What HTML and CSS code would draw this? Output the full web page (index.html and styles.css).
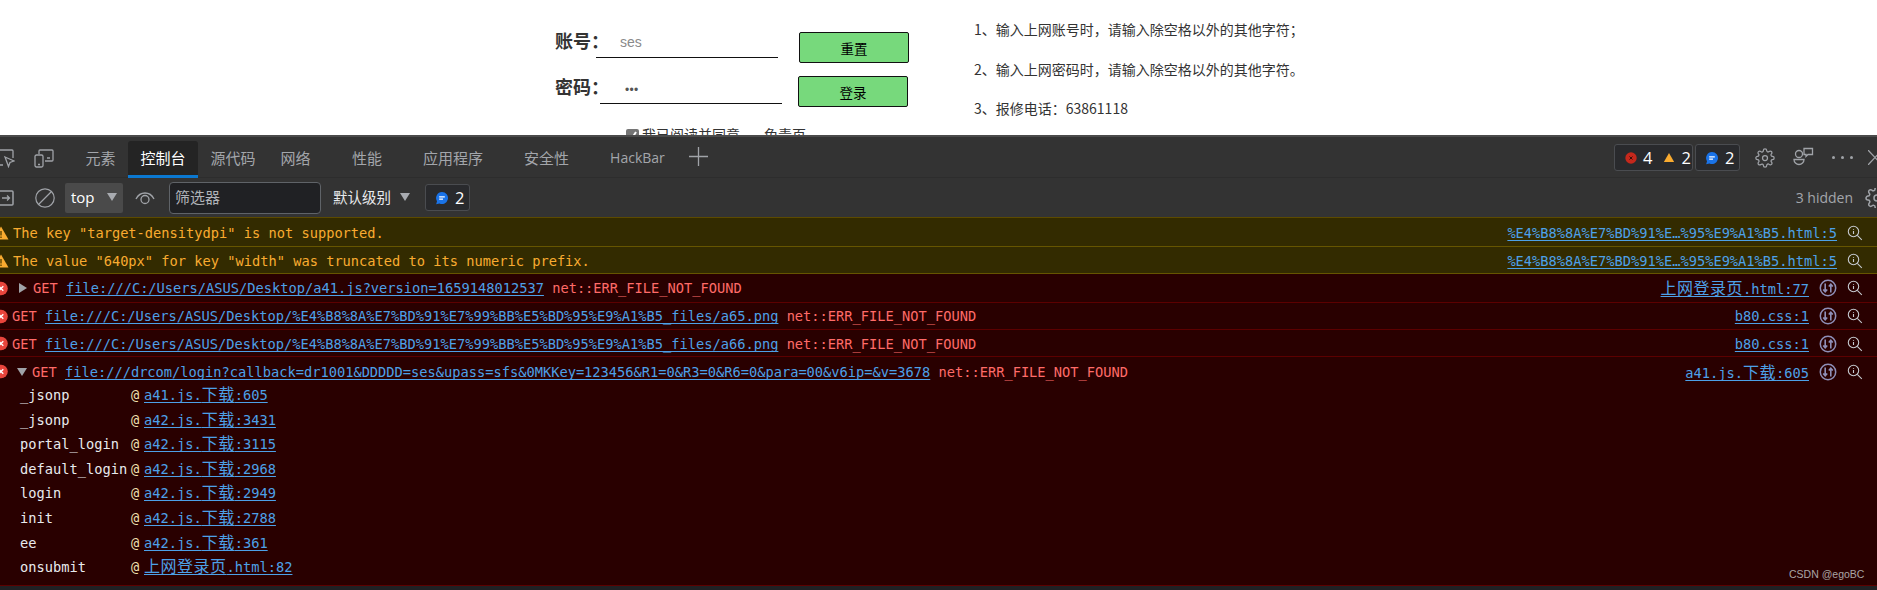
FILE: index.html
```html
<!DOCTYPE html>
<html lang="zh-CN">
<head>
<meta charset="utf-8">
<title>上网登录页</title>
<link rel="stylesheet" href="styles.css">
</head>
<body>
<svg class="defs" width="0" height="0" aria-hidden="true">
  <symbol id="gear" viewBox="0 0 24 24"><g fill="none" stroke="currentColor" stroke-width="1.5"><circle cx="12" cy="12" r="3"/><path d="M19.4 15a1.65 1.65 0 0 0 .33 1.82l.06.06a2 2 0 0 1 0 2.83 2 2 0 0 1-2.83 0l-.06-.06a1.65 1.65 0 0 0-1.82-.33 1.65 1.65 0 0 0-1 1.51V21a2 2 0 0 1-2 2 2 2 0 0 1-2-2v-.09A1.65 1.65 0 0 0 9 19.4a1.65 1.65 0 0 0-1.82.33l-.06.06a2 2 0 0 1-2.83 0 2 2 0 0 1 0-2.83l.06-.06a1.65 1.65 0 0 0 .33-1.82 1.65 1.65 0 0 0-1.51-1H3a2 2 0 0 1-2-2 2 2 0 0 1 2-2h.09A1.65 1.65 0 0 0 4.6 9a1.65 1.65 0 0 0-.33-1.82l-.06-.06a2 2 0 0 1 0-2.83 2 2 0 0 1 2.83 0l.06.06a1.65 1.65 0 0 0 1.82.33H9a1.65 1.65 0 0 0 1-1.51V3a2 2 0 0 1 2-2 2 2 0 0 1 2 2v.09a1.65 1.65 0 0 0 1 1.51 1.65 1.65 0 0 0 1.82-.33l.06-.06a2 2 0 0 1 2.83 0 2 2 0 0 1 0 2.83l-.06.06a1.65 1.65 0 0 0-.33 1.82V9a1.65 1.65 0 0 0 1.51 1H21a2 2 0 0 1 2 2 2 2 0 0 1-2 2h-.09a1.65 1.65 0 0 0-1.51 1z"/></g></symbol>
  <symbol id="chat" viewBox="0 0 14 14"><path fill="#1a73e8" d="M7 1a6 6 0 1 1-2.6 11.4L1.2 13.2l.8-3A6 6 0 0 1 7 1z"/><path stroke="#fff" stroke-width="1.2" d="M4.2 5.8h5.6M4.2 8.2h3.8"/></symbol>
  <symbol id="warn" viewBox="0 0 16 16"><path fill="#f9ab30" d="M8 1.5 15.5 14.5H.5z"/></symbol>
  <symbol id="warn-clip" viewBox="7 0 9 16"><path fill="#f9ab30" d="M8 1.5 15.5 14.5H.5z"/><path stroke="#5b4300" stroke-width="1.4" d="M8 6v4.5M8 11.5v1.4"/></symbol>
  <symbol id="err-clip" viewBox="6.5 0 8 15"><circle cx="7.5" cy="7.5" r="6.8" fill="#e8453c"/><path stroke="#fff" stroke-width="1.4" d="m5.2 5.2 4.6 4.6m0-4.6-4.6 4.6"/></symbol>
  <symbol id="search" viewBox="0 0 16 16"><g fill="none" stroke="#c5c9cf" stroke-width="1.1"><circle cx="6.5" cy="6.5" r="5.2"/><path d="m10.3 10.3 4.5 4.5M6.5 4.2v.9M6.5 6v3"/></g></symbol>
  <symbol id="net" viewBox="0 0 18 18"><circle cx="9" cy="9" r="7.7" fill="none" stroke="#8f8fb8" stroke-width="1.5"/><path fill="none" stroke="#8f8fb8" stroke-width="1.6" d="M6.2 4.5v8m-2-2 2 2.2 2-2.2M11.8 13.500v-8m-2 2 2-2.200 2 2.200"/></symbol>
</svg>

<section class="page">
  <form class="login">
    <div class="row-login">
      <label class="lbl">账号：</label>
      <span class="field">ses</span>
      <button class="btn" type="button">重置</button>
    </div>
    <div class="row-login second">
      <label class="lbl">密码：</label>
      <span class="field pass">•••</span>
      <button class="btn" type="button">登录</button>
    </div>
    <div class="agree">
      <span class="check"><svg viewBox="0 0 13 13" width="13" height="13"><path fill="none" stroke="#fff" stroke-width="2" d="m3 7 2.500 3L10 3"/></svg></span>
      <span>我已阅读并同意</span><span class="disclaimer">免责页</span>
    </div>
  </form>
  <div class="tips">
    <p>1、输入上网账号时，请输入除空格以外的其他字符；</p>
    <p>2、输入上网密码时，请输入除空格以外的其他字符。</p>
    <p>3、报修电话：63861118</p>
  </div>
</section>

<section class="devtools">
  <header class="tabbar">
    <svg class="ic-inspect" width="15" height="20" viewBox="6 0 15 20"><g fill="none" stroke="#a0a3a8" stroke-width="1.300"><path d="M9 17H2a1 1 0 0 1-1-1V3a1 1 0 0 1 1-1h16a1 1 0 0 1 1 1v7"/><path d="m11 9 9 4-4 1.500-1.500 4z"/></g></svg>
    <svg class="ic-device" width="20" height="19" viewBox="0 0 20 19"><g fill="none" stroke="#a0a3a8" stroke-width="1.300"><path d="M5 5V2a1 1 0 0 1 1-1h12a1 1 0 0 1 1 1v9a1 1 0 0 1-1 1h-7"/><rect x="1" y="6" width="8" height="12" rx="1.500"/><path d="M13 9h3M4 15.500h2"/></g></svg>
    <nav class="tabs">
      <span class="tab">元素</span>
      <span class="tab active">控制台</span>
      <span class="tab">源代码</span>
      <span class="tab net-tab">网络</span>
      <span class="tab wide">性能</span>
      <span class="tab wide">应用程序</span>
      <span class="tab wide">安全性</span>
      <span class="tab wide hack">HackBar</span>
      <svg class="plus" width="19" height="19" viewBox="0 0 19 19"><path stroke="#a0a3a8" stroke-width="1.300" d="M9.500 0v19M0 9.500h19"/></svg>
    </nav>
    <div class="tab-right">
      <span class="badge big">
        <svg width="12" height="12" viewBox="0 0 12 12"><circle cx="6" cy="6" r="5.700" fill="#c5281c"/><path stroke="#3a0d08" stroke-width="1" d="m4.500 4.500 3 3m0-3-3 3"/></svg>
        <b>4</b>
        <svg class="warn-s" width="12" height="11"><use href="#warn"/></svg>
        <b>2</b>
      </span>
      <span class="badge small">
        <svg width="13" height="13"><use href="#chat"/></svg>
        <b>2</b>
      </span>
      <svg class="gear" width="20" height="20"><use href="#gear"/></svg>
      <svg class="people" width="21" height="21" viewBox="0 0 21 21"><g fill="none" stroke="#a0a3a8" stroke-width="1.300"><circle cx="6" cy="7" r="3.500"/><path d="M1 12.500h10a5 5 0 0 1-10 0zM11 1.500h8.500v6H15l-2 2v-2h-2z"/></g></svg>
      <span class="dots"><i></i><i></i><i></i></span>
      <svg class="close" width="9" height="15" viewBox="0 0 9 15"><path fill="none" stroke="#a0a3a8" stroke-width="1.300" d="m0 0 14 15M14 0 0 15"/></svg>
    </div>
  </header>

  <div class="toolbar">
    <svg class="ic-panel" width="14" height="16" viewBox="0 0 14 16"><path fill="none" stroke="#a0a3a8" stroke-width="1.500" d="M0 1h12a1 1 0 0 1 1 1v12a1 1 0 0 1-1 1H0"/><path fill="none" stroke="#a0a3a8" stroke-width="1.300" d="M2 8h7M7 5.500 9.500 8 7 10.500"/></svg>
    <svg class="ic-clear" width="20" height="20" viewBox="0 0 20 20"><g fill="none" stroke="#a0a3a8" stroke-width="1.200"><circle cx="10" cy="10" r="9.200"/><path d="M3.500 16.500 16.500 3.500"/></g></svg>
    <span class="select">top<i class="tri"></i></span>
    <svg class="ic-eye" width="20" height="14" viewBox="0 0 20 14"><g fill="none" stroke="#a0a3a8" stroke-width="1.300"><path d="M1 8c4-8 14-8 18 0"/><circle cx="10" cy="8.500" r="4"/></g></svg>
    <span class="filter">筛选器</span>
    <span class="level">默认级别<i class="tri"></i></span>
    <span class="badge msg">
      <svg width="13" height="14"><use href="#chat"/></svg>
      <b>2</b>
    </span>
    <span class="hidden-count">3 hidden</span>
    <svg class="gear clipped" width="12" height="20" viewBox="0 0 12 24" preserveAspectRatio="xMinYMid slice"><use href="#gear" width="24" height="24"/></svg>
  </div>

  <div class="console">
    <div class="msg-row warning first">
      <svg class="lead" width="9" height="16"><use href="#warn-clip"/></svg>
      <span class="text">The key "target-densitydpi" is not supported.</span>
      <a class="src">%E4%B8%8A%E7%BD%91%E…%95%E9%A1%B5.html:5</a>
      <svg class="find"><use href="#search"/></svg>
    </div>
    <div class="msg-row warning">
      <svg class="lead" width="9" height="16"><use href="#warn-clip"/></svg>
      <span class="text">The value "640px" for key "width" was truncated to its numeric prefix.</span>
      <a class="src">%E4%B8%8A%E7%BD%91%E…%95%E9%A1%B5.html:5</a>
      <svg class="find"><use href="#search"/></svg>
    </div>
    <div class="msg-row error tall">
      <svg class="lead" width="8" height="15"><use href="#err-clip"/></svg>
      <i class="arrow right"></i>
      <span class="text">GET <a>file:///C:/Users/ASUS/Desktop/a41.js?version=1659148012537</a> net::ERR_FILE_NOT_FOUND</span>
      <a class="src"><span class="cjk">上网登录页</span>.html:77</a>
      <svg class="netic"><use href="#net"/></svg>
      <svg class="find"><use href="#search"/></svg>
    </div>
    <div class="msg-row error">
      <svg class="lead" width="8" height="15"><use href="#err-clip"/></svg>
      <span class="text close-lead">GET <a>file:///C:/Users/ASUS/Desktop/%E4%B8%8A%E7%BD%91%E7%99%BB%E5%BD%95%E9%A1%B5_files/a65.png</a> net::ERR_FILE_NOT_FOUND</span>
      <a class="src">b80.css:1</a>
      <svg class="netic"><use href="#net"/></svg>
      <svg class="find"><use href="#search"/></svg>
    </div>
    <div class="msg-row error lower">
      <svg class="lead" width="8" height="15"><use href="#err-clip"/></svg>
      <span class="text close-lead">GET <a>file:///C:/Users/ASUS/Desktop/%E4%B8%8A%E7%BD%91%E7%99%BB%E5%BD%95%E9%A1%B5_files/a66.png</a> net::ERR_FILE_NOT_FOUND</span>
      <a class="src">b80.css:1</a>
      <svg class="netic"><use href="#net"/></svg>
      <svg class="find"><use href="#search"/></svg>
    </div>
    <div class="msg-row error last">
      <svg class="lead" width="8" height="15"><use href="#err-clip"/></svg>
      <i class="arrow down"></i>
      <span class="text">GET <a>file:///drcom/login?callback=dr1001&amp;DDDDD=ses&amp;upass=sfs&amp;0MKKey=123456&amp;R1=0&amp;R3=0&amp;R6=0&amp;para=00&amp;v6ip=&amp;v=3678</a> net::ERR_FILE_NOT_FOUND</span>
      <a class="src">a41.js.<span class="cjk">下载</span>:605</a>
      <svg class="netic"><use href="#net"/></svg>
      <svg class="find"><use href="#search"/></svg>
    </div>
    <div class="stack">
      <span>_jsonp</span><span>@</span><a>a41.js.<span class="cjk">下载</span>:605</a>
      <span>_jsonp</span><span>@</span><a>a42.js.<span class="cjk">下载</span>:3431</a>
      <span>portal_login</span><span>@</span><a>a42.js.<span class="cjk">下载</span>:3115</a>
      <span>default_login</span><span>@</span><a>a42.js.<span class="cjk">下载</span>:2968</a>
      <span>login</span><span>@</span><a>a42.js.<span class="cjk">下载</span>:2949</a>
      <span>init</span><span>@</span><a>a42.js.<span class="cjk">下载</span>:2788</a>
      <span>ee</span><span>@</span><a>a42.js.<span class="cjk">下载</span>:361</a>
      <span>onsubmit</span><span>@</span><a><span class="cjk">上网登录页</span>.html:82</a>
    </div>
  </div>
  <span class="watermark">CSDN @egoBC</span>
</section>
</body>
</html>
```

FILE: styles.css
```css
* { box-sizing: border-box; }
html, body { margin: 0; padding: 0; }
body {
  width: 1877px;
  height: 590px;
  overflow: hidden;
  background: #fff;
  font-family: "Liberation Sans", "Noto Sans CJK SC", sans-serif;
}
.defs { position: absolute; }

/* login page */
.page {
  height: 135px;
  overflow: hidden;
  display: flex;
  padding-left: 555px;
}
.login { width: 419px; padding-top: 32px; }
.row-login { display: flex; align-items: flex-start; height: 31px; }
.row-login.second { margin-top: 13px; }
.lbl {
  width: 41px;
  white-space: nowrap;
  font-size: 18px;
  font-weight: 700;
  line-height: 22px;
  margin-top: -1px;
  color: #333;
}
.field {
  width: 182px;
  height: 26px;
  border-bottom: 1px solid #111;
  padding-left: 24px;
  font-size: 14px;
  line-height: 21px;
  color: #8a8a8a;
}
.second .lbl { margin-top: 1px; }
.field.pass { margin-left: 4px; height: 28px; padding-left: 25px; font-size: 12px; line-height: 29px; letter-spacing: 0.300px; color: #555; }
.btn {
  width: 110px;
  height: 31px;
  margin-left: 21px;
  padding: 0;
  background: #77d97c;
  border: 1px solid #111;
  border-radius: 2px;
  font-family: "Noto Sans CJK SC", sans-serif;
  font-size: 13.500px;
  color: #000;
}
.second .btn { margin-left: 16px; }
.agree {
  display: flex;
  align-items: center;
  margin: 20px 0 0 71px;
  font-size: 14px;
  line-height: 16px;
  color: #333;
  white-space: nowrap;
}
.check { width: 13px; height: 13px; margin-right: 3px; background: #757575; border-radius: 2px; display: block; }
.check svg { display: block; }
.disclaimer { margin-left: 24px; }
.tips { padding-top: 20px; font-family: "Noto Sans CJK SC", sans-serif; font-size: 14px; color: #333; }
.tips p { margin: 0 0 20px; line-height: 19.500px; white-space: nowrap; }

/* devtools */
.devtools {
  position: relative;
  height: 455px;
  background: #202124;
  color: #e8eaed;
  border-top: 2px solid #4b4b4b;
  font-family: "Noto Sans CJK SC", sans-serif;
}
.tabbar {
  display: flex;
  align-items: center;
  height: 41px;
  background: #333;
  border-bottom: 1px solid #2d2d2d;
}
.ic-inspect { flex: none; margin-top: 2px; }
.ic-device { flex: none; margin: 2px 0 0 19px; }
.tabs { display: flex; align-items: stretch; height: 37px; margin: 4px 0 0 19px; }
.tab {
  display: flex;
  align-items: center;
  padding: 0 12.500px 3px;
  font-size: 15px;
  color: #a3a6ab;
  white-space: nowrap;
}
.tab.active { background: #242424; color: #fff; border-bottom: 3px solid #0b78d0; border-radius: 3px 3px 0 0; padding-bottom: 0; }
.tab.net-tab { padding-right: 21px; }
.tab.wide { padding: 0 20.500px 3px; }
.tab.hack { font-family: "Open Sans", sans-serif; font-size: 14px; padding-right: 24px; }
.plus { align-self: center; margin-top: -6px; }
.tab-right { margin-left: auto; display: flex; align-items: center; margin-top: 1px; }
.badge {
  display: flex;
  align-items: center;
  height: 27px;
  background: #292a2d;
  border: 1px solid #4a4c50;
  border-radius: 3px;
  font-family: "Open Sans", sans-serif;
  font-size: 16.500px;
}
.badge b { font-weight: 400; color: #fff; }
.badge.big { width: 79px; padding-left: 10px; gap: 6px; }
.badge.big .warn-s { margin-left: 5px; }
.badge.small { width: 45px; margin-left: 2px; padding-left: 9px; gap: 6px; }
.badge.small svg, .badge.msg svg { width: 14px; height: 14px; }
.gear { color: #a0a3a8; }
.tab-right .gear { margin-left: 15px; }
.people { margin-left: 18px; }
.dots { display: flex; gap: 6px; margin-left: 18px; }
.dots i { width: 3px; height: 3px; border-radius: 50%; background: #a0a3a8; }
.close { margin-left: 15px; }

.toolbar {
  display: flex;
  align-items: center;
  height: 39px;
  background: #333;
  font-size: 14px;
}
.ic-panel { flex: none; }
.ic-clear { flex: none; margin-left: 21px; }
.select {
  display: flex;
  align-items: center;
  width: 58px;
  height: 30px;
  margin-left: 10px;
  padding: 0 0 1px 6px;
  background: #4a4a4a;
  border-radius: 2px;
  font-family: "Open Sans", sans-serif;
  font-size: 15px;
  color: #fff;
}
.tri {
  width: 0;
  height: 0;
  border-left: 5px solid transparent;
  border-right: 5px solid transparent;
  border-top: 8px solid #a8abb0;
}
.select .tri { margin-left: 12px; }
.ic-eye { flex: none; margin-left: 12px; }
.filter {
  display: flex;
  align-items: center;
  width: 152px;
  height: 32px;
  margin-left: 14px;
  padding: 0 0 2px 5px;
  background: #202124;
  border: 1px solid #5f6368;
  border-radius: 4px;
  font-size: 15px;
  color: #b0b3b8;
}
.level { display: flex; align-items: center; margin-left: 12px; padding-bottom: 2px; font-size: 14.500px; color: #e8eaed; }
.level .tri { margin-left: 9px; }
.badge.msg { width: 45px; margin-left: 15px; padding-left: 9px; gap: 6px; }
.hidden-count { margin-left: auto; font-family: "Open Sans", sans-serif; font-size: 14px; color: #a3a6ab; }
.gear.clipped { margin-left: 12px; flex: none; }

.console { font-family: "DejaVu Sans Mono", "Noto Sans CJK SC", monospace; font-size: 13.700px; border-top: 1px solid #5c4a00; }
.msg-row {
  display: flex;
  align-items: center;
  height: 27px;
  white-space: nowrap;
}
.msg-row.first { height: 29px; }
.msg-row.tall { height: 29px; }
.warning { background: #332b00; border-bottom: 1px solid #665500; color: #f9ab30; padding-top: 1px; }
.error { background: #290000; border-bottom: 1px solid #5c0000; color: #ff6b68; }
.error.lower { padding-top: 1px; }
.error.last { padding-top: 2px; border-bottom: 0; }
.lead { flex: none; }
.warning .text { margin-left: 4px; }
.error .text { margin-left: 24px; }
.error .text.close-lead { margin-left: 4px; }
.arrow { width: 0; height: 0; flex: none; }
.arrow.right { margin-left: 11px; margin-right: -18px; border-top: 5px solid transparent; border-bottom: 5px solid transparent; border-left: 8px solid #a0a3a8; }
.arrow.down { margin-left: 9px; margin-right: -19px; border-left: 5px solid transparent; border-right: 5px solid transparent; border-top: 8px solid #a0a3a8; }
.text { margin-right: auto; }
a, .src {
  color: #4da1e8;
  text-decoration: underline;
  text-decoration-thickness: 1px;
  text-decoration-skip-ink: none;
  text-underline-offset: 2px;
}
.cjk { font-family: "Noto Sans CJK SC", sans-serif; font-size: 16px; letter-spacing: 0.500px; line-height: 1; text-underline-offset: 0; }
.src { flex: none; }
.netic { width: 18px; height: 18px; margin-left: 10px; flex: none; }
.find { width: 16px; height: 16px; flex: none; margin: 0 14px 0 10px; }
.stack {
  display: grid;
  grid-template-columns: 111px 13px auto;
  justify-content: start;
  grid-auto-rows: 24.600px;
  align-items: start;
  line-height: 22px;
  height: 202px;
  padding: 0 0 0 20px;
  background: #290000;
  border-bottom: 1px solid #5c0000;
  color: #e8eaed;
  white-space: nowrap;
}
.stack > span:nth-child(3n+2) { color: #f0e0b0; }
.watermark {
  position: absolute;
  left: 1789px;
  top: 431px;
  font-family: "Liberation Sans", sans-serif;
  font-size: 10.500px;
  color: #a9a4a4;
}
```
